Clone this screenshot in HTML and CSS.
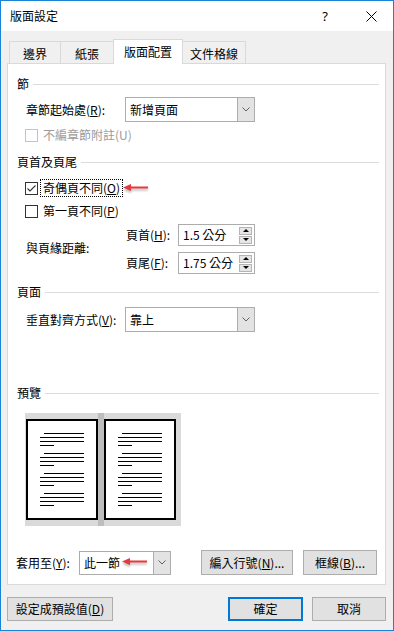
FILE: index.html
```html
<!DOCTYPE html>
<html lang="zh-Hant">
<head>
<meta charset="utf-8">
<title>版面設定</title>
<link rel="stylesheet" href="styles.css">
</head>
<body>
<div class="window">
  <div class="titlebar">
    <span class="title">版面設定</span>
    <span class="help">?</span>
    <span class="close"><svg width="11" height="11" viewBox="0 0 11 11"><path d="M0.5 0.5L10.5 10.5M10.5 0.5L0.5 10.5" stroke="#000" stroke-width="1" fill="none"/></svg></span>
  </div>
  <div class="client">
    <div class="tabs">
      <div class="tab t1">邊界</div>
      <div class="tab t2">紙張</div>
      <div class="tab sel">版面配置</div>
      <div class="tab t4">文件格線</div>
    </div>
    <div class="panel">
      <div class="ghdr g1"><span>節</span><i class="rule"></i></div>
      <div class="row r-start">
        <span class="lbl">章節起始處(<u>R</u>):</span>
        <div class="combo wide">
          <span class="val">新增頁面</span>
          <span class="drop"><svg width="8" height="5" viewBox="0 0 8 5"><path d="M0.5 0.5L4 4L7.5 0.5" stroke="#606060" fill="none"/></svg></span>
        </div>
      </div>
      <div class="row chk-row r-u disabled">
        <span class="cb"></span><span class="ctext">不編章節附註(U)</span>
      </div>
      <div class="ghdr g2"><span>頁首及頁尾</span><i class="rule"></i></div>
      <div class="row chk-row r-o">
        <span class="cb"><svg width="11" height="11" viewBox="0 0 11 11"><path d="M1.5 5.5L4 8L9.5 2.5" stroke="#333" stroke-width="1.1" fill="none"/></svg></span>
        <span class="focus">奇偶頁不同(<u>O</u>)</span>
        <svg class="redarrow" width="27" height="11" viewBox="0 0 27 11"><polygon points="0,4.5 8,1 8,8" fill="#e8383d"/><rect x="6" y="3.5" width="19" height="2" fill="#e8383d"/></svg>
      </div>
      <div class="row chk-row r-p">
        <span class="cb"></span><span class="ctext">第一頁不同(<u>P</u>)</span>
      </div>
      <div class="row spin-group">
        <span class="lbl spin-lbl">與頁緣距離:</span>
        <div class="spin-col">
          <div class="spin-row">
            <span class="slbl">頁首(<u>H</u>):</span>
            <div class="spin"><span class="sval">1.5 公分</span><span class="arrows"><i class="sb"><b class="up"></b></i><i class="sb"><b class="dn"></b></i></span></div>
          </div>
          <div class="spin-row">
            <span class="slbl">頁尾(<u>F</u>):</span>
            <div class="spin"><span class="sval">1.75 公分</span><span class="arrows"><i class="sb"><b class="up"></b></i><i class="sb"><b class="dn"></b></i></span></div>
          </div>
        </div>
      </div>
      <div class="ghdr g3"><span>頁面</span><i class="rule"></i></div>
      <div class="row r-v">
        <span class="lbl">垂直對齊方式(<u>V</u>):</span>
        <div class="combo wide">
          <span class="val">靠上</span>
          <span class="drop"><svg width="8" height="5" viewBox="0 0 8 5"><path d="M0.5 0.5L4 4L7.5 0.5" stroke="#606060" fill="none"/></svg></span>
        </div>
      </div>
      <div class="ghdr g4"><span>預覽</span><i class="rule"></i></div>
      <div class="preview">
        <div class="page">
          <div class="para"><i class="l1"></i><i class="l2"></i><i class="l2"></i><i class="l4"></i></div>
          <div class="para"><i class="l1"></i><i class="l2"></i><i class="l2"></i><i class="l4"></i></div>
          <div class="para"><i class="l1"></i><i class="l2"></i><i class="l2"></i><i class="l4"></i></div>
          <div class="para"><i class="l1"></i><i class="l2"></i><i class="l2"></i><i class="l4"></i></div>
        </div>
        <div class="gutter"></div>
        <div class="page">
          <div class="para"><i class="l1"></i><i class="l2"></i><i class="l2"></i><i class="l4"></i></div>
          <div class="para"><i class="l1"></i><i class="l2"></i><i class="l2"></i><i class="l4"></i></div>
          <div class="para"><i class="l1"></i><i class="l2"></i><i class="l2"></i><i class="l4"></i></div>
          <div class="para"><i class="l1"></i><i class="l2"></i><i class="l2"></i><i class="l4"></i></div>
        </div>
      </div>
      <div class="row apply">
        <span class="lbl apply-lbl">套用至(<u>Y</u>):</span>
        <div class="combo narrow">
          <span class="val">此一節</span>
          <svg class="redarrow overlay" width="27" height="11" viewBox="0 0 27 11"><polygon points="0,4.5 8,1 8,8" fill="#e8383d"/><rect x="6" y="3.5" width="19" height="2" fill="#e8383d"/></svg>
          <span class="drop"><svg width="8" height="5" viewBox="0 0 8 5"><path d="M0.5 0.5L4 4L7.5 0.5" stroke="#606060" fill="none"/></svg></span>
        </div>
        <button class="btn b-line">編入行號(<u>N</u>)...</button>
        <button class="btn b-border">框線(<u>B</u>)...</button>
      </div>
    </div>
    <div class="footer">
      <button class="btn b-default">設定成預設值(<u>D</u>)</button>
      <button class="btn b-ok">確定</button>
      <button class="btn b-cancel">取消</button>
    </div>
  </div>
</div>
</body>
</html>
```
FILE: styles.css
```css
* { box-sizing: border-box; }
html, body { margin: 0; padding: 0; }
body {
  width: 394px;
  height: 631px;
  overflow: hidden;
  background: #fff;
  font-family: "Noto Sans CJK TC", "Noto Sans", sans-serif;
  font-size: 12px;
  line-height: 16px;
  color: #000;
}
u { text-underline-offset: 1px; }

.window {
  width: 394px;
  height: 631px;
  border: 1px solid #1883d7;
  background: #f0f0f0;
  display: flex;
  flex-direction: column;
}
.titlebar {
  flex: none;
  height: 30px;
  background: #fff;
  display: flex;
  align-items: center;
  padding-left: 9px;
}
.title { flex: 1; }
.help {
  width: 10px;
  text-align: center;
  margin-right: 36px;
  font-family: "Noto Sans", sans-serif;
  font-size: 13px;
}
.close { width: 11px; height: 11px; margin-right: 16px; display: flex; }

.client {
  flex: 1;
  display: flex;
  flex-direction: column;
  padding: 8px 7px 0 6px;
}
.tabs {
  display: flex;
  align-items: flex-end;
  height: 24px;
  margin-left: 2px;
  position: relative;
  z-index: 2;
}
.tab {
  height: 22px;
  border: 1px solid #d9d9d9;
  border-bottom: none;
  background: #f0f0f0;
  margin-right: -1px;
  display: flex;
  align-items: center;
  justify-content: center;
  padding-top: 2px;
}
.t1 { width: 52px; }
.t2 { width: 54px; }
.t4 { width: 64px; }
.tab.sel {
  width: 70px;
  height: 25px;
  margin-bottom: -1px;
  background: #fff;
  padding-top: 0;
}

.panel {
  height: 522px;
  border: 1px solid #d9d9d9;
  background: #fff;
  display: flex;
  flex-direction: column;
}
.ghdr {
  display: flex;
  align-items: center;
  height: 16px;
  padding: 0 6px 0 9px;
}
.rule { flex: 1; height: 1px; background: #dcdcdc; margin-left: 4px; }
.g1 { margin-top: 12px; }
.g2 { margin-top: 11px; }
.g3 { margin-top: 10px; }
.g4 { margin-top: 53px; }

.row { display: flex; align-items: center; padding-left: 18px; }
.lbl { width: 99px; flex: none; }
.r-start { margin-top: 5px; height: 25px; }
.r-v { margin-top: 7px; height: 25px; }

.combo {
  position: relative;
  display: flex;
  height: 25px;
  border: 1px solid #acacac;
  background: #fff;
}
.combo.wide { width: 130px; }
.combo .val { flex: 1; padding-left: 4px; display: flex; align-items: center; }
.combo .drop {
  width: 17px;
  border-left: 1px solid #acacac;
  background: #e3e3e3;
  display: flex;
  align-items: center;
  justify-content: center;
}

.chk-row { padding-left: 17px; height: 16px; }
.cb {
  width: 13px;
  height: 13px;
  border: 1px solid #333;
  background: #fff;
  flex: none;
  display: flex;
  align-items: center;
  justify-content: center;
}
.ctext { margin-left: 5px; }
.disabled .cb { border-color: #c4c4c4; }
.disabled .ctext { color: #9b9b9b; }
.r-u { margin-top: 5px; }
.r-o { margin-top: 9px; height: 18px; }
.r-p { margin-top: 6px; }
.focus {
  margin-left: 2px;
  height: 18px;
  padding: 0 2px;
  border: 1px dotted #000;
  display: flex;
  align-items: center;
}
.redarrow { flex: none; filter: drop-shadow(0 2px 1px rgba(0,0,0,0.28)); }
.r-o .redarrow { margin-left: 0; margin-top: 1px; }

.spin-group { margin-top: 5px; height: 50px; }
.spin-lbl { margin-top: -3px; }
.spin-col { display: flex; flex-direction: column; gap: 6px; padding-left: 1px; }
.spin-row { display: flex; align-items: center; }
.slbl { width: 52px; }
.spin {
  width: 77px;
  height: 22px;
  border: 1px solid #acacac;
  background: #fff;
  display: flex;
  align-items: center;
}
.sval { flex: 1; padding-left: 4px; }
.arrows { display: flex; flex-direction: column; gap: 1px; margin-right: 2px; }
.sb {
  width: 13px;
  height: 8px;
  border: 1px solid #b4b4b4;
  background: #e6e6e6;
  display: flex;
  align-items: center;
  justify-content: center;
}
.up { width: 0; height: 0; border-left: 3px solid transparent; border-right: 3px solid transparent; border-bottom: 3px solid #000; }
.dn { width: 0; height: 0; border-left: 3px solid transparent; border-right: 3px solid transparent; border-top: 3px solid #000; }

.preview {
  margin: 12px 0 0 17px;
  width: 156px;
  height: 113px;
  background: #dadada;
  display: flex;
  padding-left: 1px;
}
.gutter { width: 6px; background: #bdbdbd; }
.page {
  width: 72px;
  height: 101px;
  margin-top: 6px;
  background: #fff;
  border: 2px solid #000;
  padding: 12px 0 0 12px;
  display: flex;
  flex-direction: column;
  gap: 7px;
}
.para { display: flex; flex-direction: column; gap: 3px; }
.para i { display: block; height: 1px; background: #000; }
.para .l1 { width: 40px; margin-left: 4px; }
.para .l2 { width: 44px; }
.para .l4 { width: 14px; }

.apply { margin-top: 24px; height: 25px; padding-left: 8px; }
.apply-lbl { width: 63px; }
.combo.narrow { width: 92px; height: 24px; }
.combo .overlay { position: absolute; left: 42px; top: 5px; }

.btn {
  font: inherit;
  color: #000;
  padding: 0;
  height: 24px;
  border: 1px solid #adadad;
  background: #e1e1e1;
  display: flex;
  align-items: center;
  justify-content: center;
}
.b-line { width: 92px; margin-left: 30px; height: 25px; }
.b-border { width: 74px; margin-left: 10px; height: 25px; }

.footer { display: flex; margin-top: 12px; height: 24px; }
.b-default { width: 106px; margin-left: 0; }
.b-ok { width: 75px; margin-left: auto; border: 2px solid #0078d7; }
.b-cancel { width: 74px; margin-left: 9px; }
```
